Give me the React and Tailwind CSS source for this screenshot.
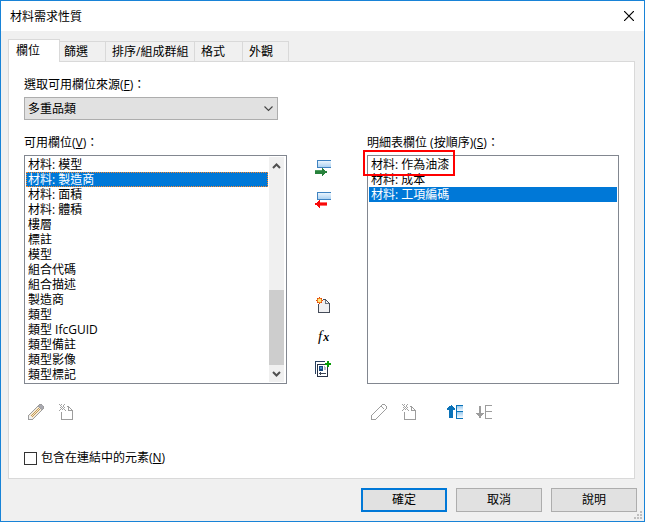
import { useState } from 'react';

const TABS = [
  { label: '篩選', className: 'w-[46px] pl-[4px]' },
  { label: '排序/組成群組', className: 'w-[89px] pl-[6px]' },
  { label: '格式', className: 'w-[48px] pl-[6px]' },
  { label: '外觀', className: 'w-[46px] pl-[6px]' },
];

const AVAILABLE_FIELDS = [
  '材料: 模型',
  '材料: 製造商',
  '材料: 面積',
  '材料: 體積',
  '樓層',
  '標註',
  '模型',
  '組合代碼',
  '組合描述',
  '製造商',
  '類型',
  '類型 IfcGUID',
  '類型備註',
  '類型影像',
  '類型標記',
];

const SCHEDULED_FIELDS = ['材料: 作為油漆', '材料: 成本', '材料: 工項編碼'];

function Icon({ children, className = '' }) {
  return (
    <svg
      viewBox="0 0 16 16"
      shapeRendering="crispEdges"
      className={`block h-4 w-4 shrink-0 ${className}`}
    >
      {children}
    </svg>
  );
}

function FieldBar({ id }) {
  return (
    <>
      <defs>
        <linearGradient id={id} x1="0" y1="0" x2="0" y2="1">
          <stop offset="0" stopColor="#f4faff" />
          <stop offset="1" stopColor="#a3cdf0" />
        </linearGradient>
      </defs>
      <rect x="2" y="0" width="14" height="8" fill={`url(#${id})`} />
      <path d="M16 .5H2.5v7H16" fill="none" stroke="#3f83c1" />
    </>
  );
}

function AddFieldIcon() {
  return (
    <Icon>
      <FieldBar id="bar-add" />
      <path d="M0 10h7V8h1v1h1v1h1v1h2v2h-2v1H9v1H8v1H7v-2H0z" fill="#27813b" />
      <path d="M0 10h7v1H0z" fill="#4d9d5e" />
    </Icon>
  );
}

function RemoveFieldIcon() {
  return (
    <Icon>
      <FieldBar id="bar-remove" />
      <path d="M12 10H5V8H4v1H3v1H2v1H0v2h2v1h1v1h1v1h1v-2h7z" fill="#f70909" />
      <path d="M5 10h7v1H5zM5 13h7v1H5z" fill="#ff6a6a" />
    </Icon>
  );
}

function NewParameterIcon() {
  return (
    <Icon>
      <path d="M4 3h7l4 4v9H4z" fill="#f0f0f2" />
      <path d="M3.5 7v8.5h11v-9l-4-4H8" fill="none" stroke="#454c59" />
      <path d="M10.5 3v3.5H14" fill="none" stroke="#6d7480" />
      <path
        d="M4 0h1v7H4zM1 3h7v1H1zM2 1h1v1H2zM6 1h1v1H6zM2 5h1v1H2zM6 5h1v1H6z"
        fill="#e04010"
      />
      <path d="M3 1h3v1h1v3H6v1H3V5H2V2h1z" fill="#ee7d1c" />
      <path d="M3 2h3v3H3z" fill="#ffe680" />
    </Icon>
  );
}

function CombineIcon() {
  return (
    <Icon>
      <path d="M.5 13V.5H10" fill="none" stroke="#273f5f" />
      <path d="M2.5 3.5h10v12h-10z" fill="#fff" stroke="#273246" />
      <path d="M4 5h4v5H4z" fill="#17477f" />
      <path d="M5 6h2v2H5z" fill="#4b8ac8" />
      <path d="M9 5h2v4H9z" fill="#b7bcc5" />
      <path d="M4 12h1v-1h1v1h5v1H6v1H5v-1H4z" fill="#3b4454" />
      <path d="M10 0h6v6h-6z" fill="#fff" />
      <path d="M12 0h2v2h2v2h-2v2h-2V4h-2V2h2z" fill="#069c06" />
    </Icon>
  );
}

function PencilIcon({ colored = false }) {
  return (
    <Icon>
      <path d="M.5 15.5v-4l11-11h2l2 2v2l-11 11z" fill={colored ? '#f4ead8' : 'none'} stroke="#9d9d9d" />
      {colored && (
        <>
          <path d="M3 12L12 3M4 13L13 4" stroke="#c59a51" />
          <path d="M11 1h3l1 1v3l-2 1-3-3z" fill="#a9a9b0" />
          <path d="M1 12h2v1h1v2H1z" fill="#f1f1f1" />
        </>
      )}
      <path d="M10.5 2.5l3 3" stroke="#9d9d9d" />
    </Icon>
  );
}

function DeleteParameterIcon() {
  return (
    <Icon>
      <path d="M2.5 8v7.5h11v-9l-4-4H8" fill="none" stroke="#9d9d9d" />
      <path d="M9.5 3v3.5H13" fill="none" stroke="#9d9d9d" />
      <path
        d="M0 0h1v1H0zM2 0h1v1H2zM5 0h1v1H5zM1 1h1v1H1zM4 1h1v1H4zM2 2h1v1H2zM4 2h1v1H4zM3 3h1v1H3zM1 3h1v1H1zM5 3h1v1H5zM2 4h1v1H2zM4 4h1v1H4zM1 5h1v1H1zM5 5h1v1H5zM0 6h1v1H0zM6 6h1v1H6zM3 5h1v1H3z"
        fill="#a3a3a3"
      />
    </Icon>
  );
}

function MoveUpIcon() {
  return (
    <Icon className="ml-[29px]">
      <defs>
        <linearGradient id="rows-up" x1="0" y1="0" x2="0" y2="1">
          <stop offset="0" stopColor="#9ccbee" />
          <stop offset="1" stopColor="#f4faff" />
        </linearGradient>
      </defs>
      <path d="M10 2h6v5h-6z" fill="url(#rows-up)" />
      <path d="M10 8h6v6h-6z" fill="url(#rows-up)" />
      <path d="M16 1.5H9.5v13H16M9 7.5h7" fill="none" stroke="#0a72b8" />
      <path d="M4 1h1v1h1v1h1v1h1v2H6v8H2V6H0V4h1V3h1V2h2z" fill="#0a72b8" />
    </Icon>
  );
}

function MoveDownIcon() {
  return (
    <Icon className="ml-[13px]">
      <path d="M16 1.5H9.5v13H16M9 7.5h7" fill="none" stroke="#9d9d9d" />
      <path d="M3 2h2v7h3v1H7v1H6v1H5v2H3v-2H2v-1H1v-1H0V9h3z" fill="#9d9d9d" />
    </Icon>
  );
}

function Chevron({ up = false, className }) {
  return (
    <svg viewBox="0 0 9 6" className={`h-[6px] w-[9px] ${className}`}>
      <path
        d={up ? 'M1 5l3.5-3.5L8 5' : 'M1 1l3.5 3.5L8 1'}
        fill="none"
        stroke="currentColor"
        strokeWidth="2"
      />
    </svg>
  );
}

function FieldList({ items, selected, onSelect, focused = false }) {
  return (
    <ul className="min-w-0 flex-1">
      {items.map((item, index) => (
        <li
          key={item}
          onClick={() => onSelect(index)}
          className={`flex h-[15px] items-center border border-dotted pl-px leading-[15px] ${
            index === selected ? 'bg-[#0078d7] text-white' : ''
          } ${index === selected && focused ? 'border-[#ff8728]' : 'border-transparent'}`}
        >
          {item}
        </li>
      ))}
    </ul>
  );
}

function FieldLabel({ text, accessKey, className = '' }) {
  return (
    <div className={`h-4 pt-px ${className}`}>
      {text}(<u>{accessKey}</u>)：
    </div>
  );
}

function DialogButton({ children, primary = false }) {
  return (
    <button
      type="button"
      className={`h-6 w-[86px] bg-[#e1e1e1] ${
        primary ? 'border-2 border-[#0078d7]' : 'border border-[#adadad]'
      } flex items-center justify-center`}
    >
      {children}
    </button>
  );
}

export default function App() {
  const [available, setAvailable] = useState(1);
  const [scheduled, setScheduled] = useState(2);
  const [includeLinked, setIncludeLinked] = useState(false);

  return (
    <div
      lang="zh-Hant"
      className="relative flex h-[522px] w-[645px] flex-col overflow-hidden border border-[#1883d7] bg-[#f0f0f0] font-['Open_Sans','Noto_Sans_CJK_TC',sans-serif] text-[12px] leading-4 whitespace-nowrap text-black select-none"
    >
      <header className="flex h-[30px] shrink-0 items-center justify-between bg-white pr-[10px] pl-[9px]">
        <h1 className="pt-px">材料需求性質</h1>
        <svg viewBox="0 0 10 10" className="h-[10px] w-[10px]">
          <path d="M0 0l10 10M10 0L0 10" stroke="#000" strokeWidth="1.2" />
        </svg>
      </header>

      <nav className="flex h-[30px] shrink-0 items-end pl-[7px]">
        <div className="z-10 -mb-px h-[23px] w-[52px] border border-b-0 border-[#d9d9d9] bg-white pt-[3px] pl-[7px]">
          欄位
        </div>
        {TABS.map((tab) => (
          <div
            key={tab.label}
            className={`h-5 border-t border-r border-[#d9d9d9] pt-[2px] ${tab.className}`}
          >
            {tab.label}
          </div>
        ))}
      </nav>

      <main className="mr-[9px] ml-[7px] h-[418px] shrink-0 border border-[#d9d9d9] bg-white pt-[14px] pl-[15px]">
        <FieldLabel text="選取可用欄位來源" accessKey="F" />
        <div className="mt-[5px] flex h-[23px] w-[254px] items-center justify-between border border-[#adadad] bg-[#e1e1e1] pr-1 pl-[3px]">
          多重品類
          <svg viewBox="0 0 9 6" className="h-[6px] w-[9px]">
            <path d="M.5 .5l4 4 4-4" fill="none" stroke="#444" strokeWidth="1.1" />
          </svg>
        </div>

        <div className="mt-[14px] flex">
          <section className="w-[263px]">
            <FieldLabel text="可用欄位" accessKey="V" />
            <div className="mt-[5px] flex h-[229px] border border-[#828790] p-px">
              <FieldList
                items={AVAILABLE_FIELDS}
                selected={available}
                onSelect={setAvailable}
                focused
              />
              <div className="mr-px ml-px flex w-[15px] flex-col bg-[#f0f0f0] text-[#505050]">
                <Chevron up className="mx-auto mt-[6px]" />
                <div className="mt-auto h-[75px] bg-[#cdcdcd]" />
                <div className="h-[17px] pt-[6px]">
                  <Chevron className="mx-auto" />
                </div>
              </div>
            </div>
            <div className="mt-5 flex gap-[15px] pl-1">
              <PencilIcon colored />
              <DeleteParameterIcon />
            </div>
          </section>

          <div className="flex w-20 flex-col gap-4 pt-[26px] pl-7">
            <AddFieldIcon />
            <RemoveFieldIcon />
            <div className="mt-[73px]">
              <NewParameterIcon />
            </div>
            <div className="flex h-4 items-baseline pl-[3px] font-['Liberation_Serif',serif] text-[15px] leading-[14px] italic">
              f<span className="ml-px text-[12px] font-bold">x</span>
            </div>
            <CombineIcon />
          </div>

          <section className="w-[252px]">
            <FieldLabel text="明細表欄位 (按順序)" accessKey="S" />
            <div className="relative mt-[5px] flex h-[229px] border border-[#828790] p-px">
              <FieldList
                items={SCHEDULED_FIELDS}
                selected={scheduled}
                onSelect={setScheduled}
              />
              <div className="pointer-events-none absolute -top-[6px] -left-[5px] h-[26px] w-[92px] border-2 border-[#ff0000]" />
            </div>
            <div className="mt-5 flex pl-1">
              <PencilIcon />
              <div className="ml-[15px]">
                <DeleteParameterIcon />
              </div>
              <MoveUpIcon />
              <MoveDownIcon />
            </div>
          </section>
        </div>

        <div
          className="mt-[30px] flex items-center gap-1"
          onClick={() => setIncludeLinked(!includeLinked)}
        >
          <span className="flex h-[13px] w-[13px] items-center justify-center border border-[#333333] bg-white">
            {includeLinked && <span className="h-[7px] w-[7px] bg-[#333333]" />}
          </span>
          <span>
            包含在連結中的元素(<u>N</u>)
          </span>
        </div>
      </main>

      <footer className="flex justify-end gap-[9px] pt-[9px] pr-[7px]">
        <DialogButton primary>確定</DialogButton>
        <DialogButton>取消</DialogButton>
        <DialogButton>說明</DialogButton>
      </footer>

      {/* resize grip */}
      <svg
        viewBox="0 0 8 8"
        shapeRendering="crispEdges"
        className="absolute right-[2px] bottom-[2px] h-2 w-2"
      >
        <path d="M6 0h2v2H6zM3 3h2v2H3zM6 3h2v2H6zM0 6h2v2H0zM3 6h2v2H3zM6 6h2v2H6z" fill="#bfbfbf" />
      </svg>
    </div>
  );
}
